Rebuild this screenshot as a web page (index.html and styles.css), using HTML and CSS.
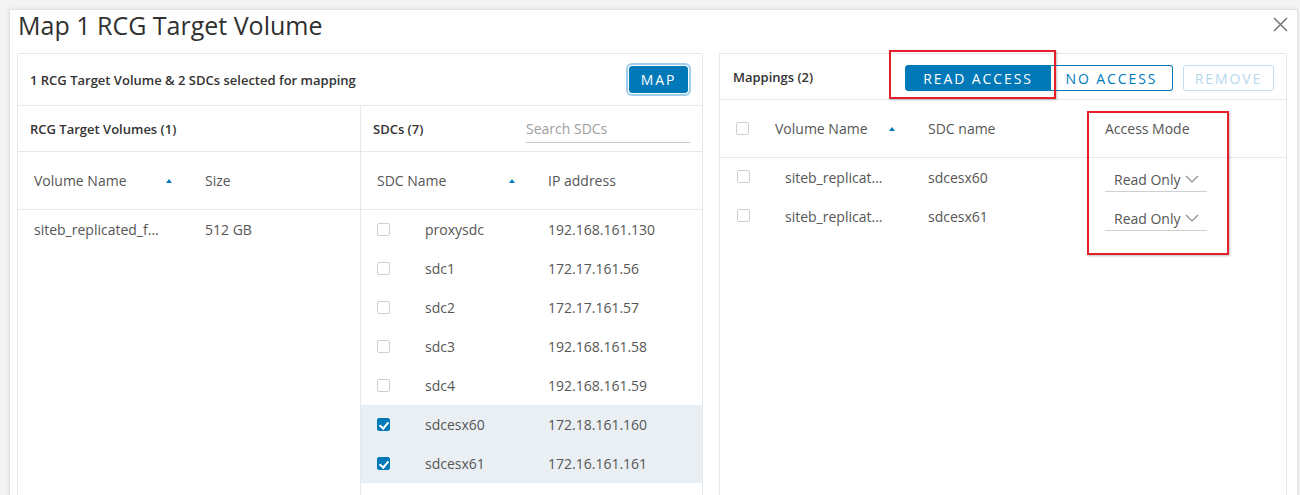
FILE: index.html
```html
<!DOCTYPE html>
<html lang="en">
<head>
<meta charset="utf-8">
<title>Map 1 RCG Target Volume</title>
<link rel="stylesheet" href="styles.css">
</head>
<body>
<div class="dialog">
  <header class="dialog-head">
    <h1 class="dialog-title">Map 1 RCG Target Volume</h1>
    <button class="close" aria-label="Close">
      <svg width="15" height="15" viewBox="0 0 15 15"><path d="M1 1 L14 14 M14 1 L1 14" stroke="#737373" stroke-width="1.5" fill="none"/></svg>
    </button>
  </header>

  <div class="panels">
    <!-- selection panel: volumes on the left, SDCs on the right -->
    <section class="panel">
      <div class="panel-bar">
        <span class="bar-title">1 RCG Target Volume &amp; 2 SDCs selected for mapping</span>
        <button class="btn btn-primary btn-focus btn-map">MAP</button>
      </div>
      <div class="split">
        <div class="col col-volumes">
          <div class="sub-bar"><span class="bar-title">RCG Target Volumes (1)</span></div>
          <div class="th-row vol-grid">
            <span class="th sortable">Volume Name <i class="sort"></i></span>
            <span class="th">Size</span>
          </div>
          <div class="tr vol-grid">
            <span>siteb_replicated_f...</span>
            <span>512 GB</span>
          </div>
        </div>

        <div class="col col-sdcs">
          <div class="sub-bar sub-bar-search">
            <span class="bar-title">SDCs (7)</span>
            <input class="search" type="text" placeholder="Search SDCs">
          </div>
          <div class="th-row sdc-grid">
            <span class="th sortable span2">SDC Name <i class="sort"></i></span>
            <span class="th">IP address</span>
          </div>
          <div class="tr sdc-grid"><span class="cb"></span><span>proxysdc</span><span>192.168.161.130</span></div>
          <div class="tr sdc-grid"><span class="cb"></span><span>sdc1</span><span>172.17.161.56</span></div>
          <div class="tr sdc-grid"><span class="cb"></span><span>sdc2</span><span>172.17.161.57</span></div>
          <div class="tr sdc-grid"><span class="cb"></span><span>sdc3</span><span>192.168.161.58</span></div>
          <div class="tr sdc-grid"><span class="cb"></span><span>sdc4</span><span>192.168.161.59</span></div>
          <div class="tr sdc-grid is-selected"><span class="cb is-checked"></span><span>sdcesx60</span><span>172.18.161.160</span></div>
          <div class="tr sdc-grid is-selected"><span class="cb is-checked"></span><span>sdcesx61</span><span>172.16.161.161</span></div>
        </div>
      </div>
    </section>

    <!-- mappings panel -->
    <section class="panel">
      <div class="panel-bar panel-bar-map">
        <span class="bar-title">Mappings (2)</span>
        <div class="actions">
          <div class="btn-group">
            <button class="btn btn-primary btn-read">READ ACCESS</button>
            <button class="btn btn-outline btn-no">NO ACCESS</button>
          </div>
          <button class="btn btn-disabled btn-remove">REMOVE</button>
        </div>
      </div>
      <div class="th-row map-grid">
        <span class="cb"></span>
        <span class="th sortable">Volume Name <i class="sort"></i></span>
        <span class="th">SDC name</span>
        <span class="th">Access Mode</span>
      </div>
      <div class="map-body">
        <div class="tr map-grid">
          <span class="cb cb-row"></span>
          <span class="vol-cell">siteb_replicat...</span>
          <span>sdcesx60</span>
          <span class="select">Read Only <svg width="14" height="8" viewBox="0 0 14 8"><path d="M1 1 L7 7 L13 1" stroke="#8c8c8c" stroke-width="1.2" fill="none"/></svg></span>
        </div>
        <div class="tr map-grid">
          <span class="cb cb-row"></span>
          <span class="vol-cell">siteb_replicat...</span>
          <span>sdcesx61</span>
          <span class="select">Read Only <svg width="14" height="8" viewBox="0 0 14 8"><path d="M1 1 L7 7 L13 1" stroke="#8c8c8c" stroke-width="1.2" fill="none"/></svg></span>
        </div>
      </div>
    </section>
  </div>

  <!-- highlight frames drawn over the toolbar and the access column -->
  <div class="callout callout-actions"></div>
  <div class="callout callout-mode"></div>
</div>
</body>
</html>
```

FILE: styles.css
```css
* {
  box-sizing: border-box;
}

body {
  margin: 0;
  background: #f4f4f4;
  font-family: "Open Sans", "Noto Sans", sans-serif;
  color: #565656;
  overflow: hidden;
}

.dialog {
  position: relative;
  margin: 10px 0 0 10px;
  width: 1287px;
  height: 520px;
  background: #fff;
  box-shadow: 0 0 0 1px #e2e2e2, 0 0 6px rgba(0, 0, 0, 0.12);
  padding: 0 10px 0 7px;
}

.dialog-head {
  height: 43px;
  display: flex;
  align-items: flex-start;
  justify-content: space-between;
}

.dialog-title {
  margin: 0;
  padding-left: 1px;
  font-size: 25px;
  line-height: 30px;
  font-weight: 400;
  color: #313131;
}

.close {
  margin-top: 7px;
  margin-right: -1px;
  padding: 0;
  border: 0;
  background: none;
  width: 15px;
  height: 15px;
  display: flex;
}

.panels {
  display: grid;
  grid-template-columns: 686px 568px;
  column-gap: 16px;
}

.panel {
  border: 1px solid #e3eaef;
  height: 470px;
  display: flex;
  flex-direction: column;
}

.panel-bar {
  height: 52px;
  border-bottom: 1px solid #e3eaef;
  padding: 0 12px 0 12px;
  display: flex;
  align-items: center;
  justify-content: space-between;
  flex-shrink: 0;
}

.panel-bar-map {
  height: 46px;
  padding: 0 12px 0 13px;
}

.bar-title {
  font-size: 13px;
  font-weight: 600;
  color: #333;
}

.btn {
  font-family: inherit;
  font-size: 14px;
  font-weight: 500;
  letter-spacing: 1.9px;
  height: 26px;
  padding: 0;
  border: 1px solid #0079b8;
  border-radius: 3px;
  background: #fff;
  color: #0079b8;
  text-align: center;
}

.btn-primary {
  background: #0079b8;
  color: #fff;
}

.btn-focus {
  box-shadow: 0 0 0 1px #fff, 0 0 0 3px #9fcdeb;
}

.btn-map {
  width: 59px;
  height: 27px;
  margin-right: 2px;
}

.actions {
  display: flex;
  align-items: center;
  gap: 10px;
  margin-top: 3px;
}

.btn-group {
  display: flex;
}

.btn-read {
  width: 146px;
  border-radius: 3px 0 0 3px;
}

.btn-no {
  width: 122px;
  border-left: 0;
  border-radius: 0 3px 3px 0;
}

.btn-disabled {
  border-color: #c1dff0;
  color: #b4d8ec;
}

.btn-remove {
  width: 91px;
}

.split {
  display: grid;
  grid-template-columns: 343px 1fr;
  flex: 1;
}

.col-volumes {
  border-right: 1px solid #e3eaef;
}

.sub-bar {
  height: 46px;
  border-bottom: 1px solid #e3eaef;
  padding: 0 12px;
  display: flex;
  align-items: center;
  justify-content: space-between;
}

.search {
  width: 164px;
  height: 28px;
  border: 0;
  border-bottom: 1px solid #c8c8c8;
  padding: 0;
  font-family: inherit;
  font-size: 14px;
  color: #565656;
  outline: none;
  background: transparent;
}

.search::placeholder {
  color: #9e9e9e;
}

.th-row {
  height: 58px;
  border-bottom: 1px solid #e3eaef;
  display: grid;
  align-items: center;
  padding-left: 16px;
  flex-shrink: 0;
}

.th {
  font-size: 14px;
  color: #565656;
}

.sortable {
  display: flex;
  align-items: center;
  justify-content: space-between;
  padding-right: 33px;
}

.sort {
  width: 0;
  height: 0;
  border-left: 3px solid transparent;
  border-right: 3px solid transparent;
  border-bottom: 4px solid #0079b8;
  margin-top: 1px;
}

.tr {
  height: 39px;
  display: grid;
  align-items: center;
  padding-left: 16px;
  font-size: 14px;
  color: #565656;
}

.vol-grid {
  grid-template-columns: 171px 1fr;
}

.sdc-grid {
  grid-template-columns: 48px 123px 1fr;
}

.span2 {
  grid-column: span 2;
}

.is-selected {
  background: #e9eff3;
}

.cb {
  position: relative;
  width: 13px;
  height: 13px;
  border: 1px solid #cfcfcf;
  border-radius: 2px;
  background: #fff;
}

.cb.is-checked {
  background: #0079b8;
  border-color: #0079b8;
}

.cb.is-checked::after {
  content: "";
  position: absolute;
  left: 3px;
  top: 1px;
  width: 4px;
  height: 7px;
  border: solid #fff;
  border-width: 0 2px 2px 0;
  transform: rotate(40deg);
}

.map-grid {
  grid-template-columns: 39px 153px 177px 1fr;
}

.map-body {
  padding-top: 0;
}

.cb-row {
  margin-left: 1px;
  margin-top: -2px;
}

.vol-cell {
  padding-left: 10px;
}

.select {
  width: 102px;
  height: 25px;
  display: flex;
  align-items: center;
  gap: 4px;
  padding-left: 9px;
  border-bottom: 1px solid #cfcfcf;
  margin-top: 4px;
  white-space: nowrap;
}

.callout {
  position: absolute;
  border: 2px solid #e5202a;
  box-shadow: 1px 1px 2px rgba(0, 0, 0, 0.25);
}

.callout-actions {
  left: 879px;
  top: 40px;
  width: 167px;
  height: 49px;
}

.callout-mode {
  left: 1077px;
  top: 101px;
  width: 142px;
  height: 144px;
}
```
